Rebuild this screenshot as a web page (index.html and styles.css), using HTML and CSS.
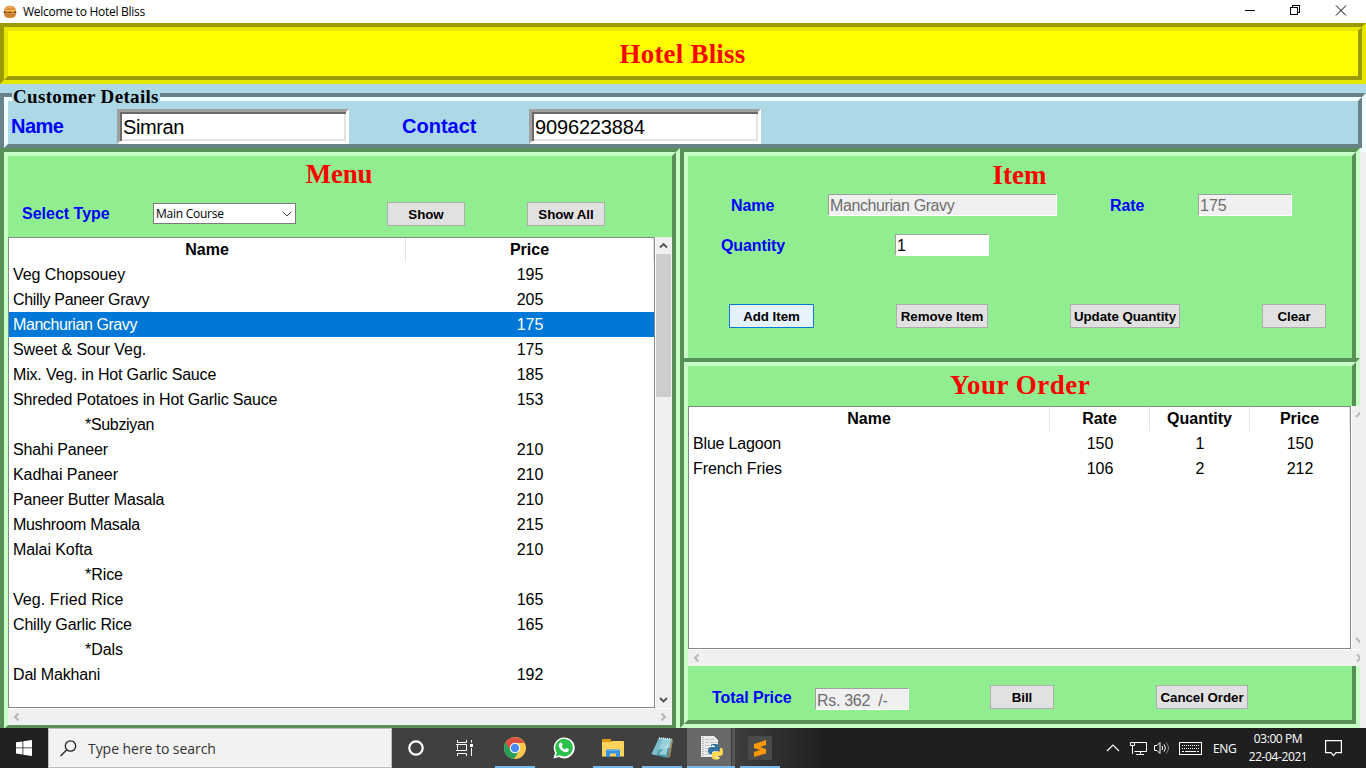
FILE: index.html
```html
<!DOCTYPE html>
<html lang="en">
<head>
<meta charset="utf-8">
<title>Welcome to Hotel Bliss</title>
<link rel="stylesheet" href="styles.css">
</head>
<body>
<header class="titlebar">
  <svg class="app-icon" width="14" height="14" viewBox="0 0 14 14"><path d="M1 5.500C1.500 2 4 .8 7 .8s5.500 1.200 6 4.700z" fill="#dc9038"/><path d="M3 3.500C5 1.800 8 1.800 10 2.500" stroke="#f5bd72" fill="none"/><path d="M.8 6h12.400v2.500H.8z" fill="#8a451a"/><path d="M1 5.500l3 2 3-1 3 1.500 3-2.500z" fill="#f0a52a"/><path d="M1 8.500h12c0 3-2 4.500-6 4.500s-6-1.500-6-4.500z" fill="#d0802d"/></svg>
  <span class="window-title">Welcome to Hotel Bliss</span>
  <svg class="window-buttons" width="110" height="20" viewBox="0 0 110 20" fill="none" stroke="#000" shape-rendering="crispEdges"><path d="M5 10.500h10M50.500 7.500h7v7h-7zM52.500 7.500v-2h7v7h-2"/><path shape-rendering="auto" d="M96 5.500l10 10M106 5.500l-10 10"/></svg>
</header>
<section class="groove banner"><div class="groove-in"><h1>Hotel Bliss</h1></div></section>
<section class="customer">
  <h2 class="legend">Customer Details</h2>
  <div class="groove blue"><div class="groove-in customer-row">
    <label class="big l-name">Name</label><div class="entry e-name tight">Simran</div>
    <label class="big l-contact">Contact</label><div class="entry e-contact">9096223884</div>
  </div></div>
</section>
<main>
  <section class="groove green menu"><div class="groove-in">
    <h2>Menu</h2>
    <div class="controls">
      <label>Select Type</label>
      <div class="combo"><span>Main Course</span><svg width="10" height="6" viewBox="0 0 10 6"><path d="M.8.8L5 5 9.200.8" fill="none" stroke="#444"/></svg></div>
      <div class="btn show">Show</div><div class="btn show-all">Show All</div>
    </div>
    <div class="tree-wrap">
      <div class="tree menu-tree">
        <div class="row head"><b>Name</b><b>Price</b></div>
        <div class="row"><span class="loose">Veg Chopsouey</span><i>195</i></div>
        <div class="row"><span class="tight">Chilly Paneer Gravy</span><i>205</i></div>
        <div class="row selected"><span class="tighter">Manchurian Gravy</span><i>175</i></div>
        <div class="row"><span class="loose">Sweet &amp; Sour Veg.</span><i>175</i></div>
        <div class="row"><span>Mix. Veg. in Hot Garlic Sauce</span><i>185</i></div>
        <div class="row"><span>Shreded Potatoes in Hot Garlic Sauce</span><i>153</i></div>
        <div class="row group"><span class="tight">*Subziyan</span><i></i></div>
        <div class="row"><span>Shahi Paneer</span><i>210</i></div>
        <div class="row"><span class="loose">Kadhai Paneer</span><i>210</i></div>
        <div class="row"><span>Paneer Butter Masala</span><i>210</i></div>
        <div class="row"><span class="tight">Mushroom Masala</span><i>215</i></div>
        <div class="row"><span class="loose">Malai Kofta</span><i>210</i></div>
        <div class="row group"><span class="loose">*Rice</span><i></i></div>
        <div class="row"><span class="looser">Veg. Fried Rice</span><i>165</i></div>
        <div class="row"><span>Chilly Garlic Rice</span><i>165</i></div>
        <div class="row group"><span class="loose">*Dals</span><i></i></div>
        <div class="row"><span>Dal Makhani</span><i>192</i></div>
      </div>
      <div class="vscroll">
        <svg width="15" height="17" viewBox="0 0 15 17"><path d="M4 10.500l3.500-3.500 3.500 3.500" fill="none" stroke="#505050" stroke-width="1.800"/></svg>
        <div class="thumb"></div>
        <svg class="down" width="15" height="17" viewBox="0 0 15 17"><path d="M4 7l3.500 3.500L11 7" fill="none" stroke="#505050" stroke-width="1.800"/></svg>
      </div>
    </div>
    <div class="hscroll"><svg width="16" height="16" viewBox="0 0 16 16"><path d="M10.500 4.500L7 8l3.500 3.500" fill="none" stroke="#b8b8b8" stroke-width="2"/></svg><svg width="16" height="16" viewBox="0 0 16 16"><path d="M5.500 4.500L9 8l-3.500 3.500" fill="none" stroke="#b8b8b8" stroke-width="2"/></svg></div>
  </div></section>
  <div class="right">
    <section class="groove green item"><div class="groove-in">
      <h2>Item</h2>
      <div class="form-row first"><label class="f-name">Name</label><div class="field disabled f-item">Manchurian Gravy</div><label class="f-rate">Rate</label><div class="field disabled num">175</div></div>
      <div class="form-row second"><label class="f-qty">Quantity</label><div class="field f-one">1</div></div>
      <div class="actions"><div class="btn add">Add Item</div><div class="btn remove">Remove Item</div><div class="btn update">Update Quantity</div><div class="btn clear">Clear</div></div>
    </div></section>
    <section class="groove green order"><div class="groove-in">
      <h2>Your Order</h2>
      <div class="order-list">
        <div class="tree-wrap">
          <div class="tree order-tree">
            <div class="row head"><b>Name</b><b>Rate</b><b>Quantity</b><b>Price</b></div>
            <div class="row"><span>Blue Lagoon</span><i>150</i><i>1</i><i>150</i></div>
            <div class="row"><span class="loose">French Fries</span><i>106</i><i>2</i><i>212</i></div>
          </div>
          <div class="vscroll cut">
            <svg width="8" height="17" viewBox="0 0 8 17"><path d="M4 11l5-5" stroke="#b8b8b8" stroke-width="2"/></svg>
            <svg class="down" width="8" height="17" viewBox="0 0 8 17"><path d="M4 6l5 5" stroke="#b8b8b8" stroke-width="2"/></svg>
          </div>
        </div>
        <div class="hscroll"><svg width="16" height="16" viewBox="0 0 16 16"><path d="M10.500 4.500L7 8l3.500 3.500" fill="none" stroke="#b8b8b8" stroke-width="2"/></svg><svg width="4" height="16" viewBox="0 0 4 16"><path d="M1 4.500L4.500 8 1 11.500" fill="none" stroke="#b8b8b8" stroke-width="2"/></svg></div>
      </div>
      <div class="total"><label>Total Price</label><div class="field disabled sum">Rs. 362&nbsp; /-</div><div class="btn bill">Bill</div><div class="btn cancel">Cancel Order</div></div>
    </div></section>
  </div>
</main>
<footer class="taskbar">
  <div class="start"><svg width="16" height="16" viewBox="0 0 16 16" fill="#fff"><path d="M0 2.300l6.500-.9v6.100H0zM7.300 1.300L16 0v7.500H7.300zM0 8.300h6.500v6.200L0 13.600zM7.300 8.300H16V16l-8.700-1.200z"/></svg></div>
  <div class="search"><svg width="17" height="17" viewBox="0 0 17 17" fill="none" stroke="#222" stroke-width="1.300"><circle cx="10.500" cy="6" r="5.200"/><path d="M6.800 9.800L.6 16"/></svg><span>Type here to search</span></div>
  <div class="task"><svg width="16" height="16" viewBox="0 0 16 16"><circle cx="8" cy="8" r="6.700" fill="none" stroke="#fff" stroke-width="2.200"/></svg></div>
  <div class="task"><svg width="17" height="16" viewBox="0 0 17 16" fill="none" stroke="#fff"><path d="M1.500 0v2.500h9V0M1.500 16v-2.500h9V16M1.500 4.500h9v6h-9zM0 4.500h1.500M0 10.500h1.500M15.500 0v2.500M15.500 8v8"/><path d="M14 4h3v3h-3z" fill="#fff" stroke="none"/></svg></div>
  <div class="task wide on"><svg width="22" height="22" viewBox="0 0 22 22"><circle cx="11" cy="11" r="11" fill="#fbc94a"/><path d="M1.500 5.500A11 11 0 0 1 20.500 6H11L6 13.500z" fill="#dc4e41"/><path d="M1.500 5.500A11 11 0 0 0 10 22l5.500-8.500H6.500z" fill="#27a05c"/><circle cx="11" cy="11" r="5.200" fill="#fff"/><circle cx="11" cy="11" r="4.200" fill="#4c8bf5"/></svg></div>
  <div class="task wide"><svg width="22" height="22" viewBox="0 0 22 22"><path d="M.5 21.500l1.500-5.600A10.500 10.500 0 1 1 6 20z" fill="#fff"/><path d="M2.700 19.400l1-3.900A8.800 8.800 0 1 1 6.700 18.300z" fill="#2bc04b"/><path d="M7.500 5.500l1.200.2 1 2.300-1 1.400c.8 1.500 2 2.500 3.500 3.100l1.200-1.400 2.500 1.200c0 2-1.300 3-3 3C9.500 15 6 11.500 5.800 8.500c0-1.300.7-2.400 1.700-3z" fill="#fff"/></svg></div>
  <div class="task wide on"><svg width="22" height="18" viewBox="0 0 22 18"><path d="M0 1q0-1 1-1h8v3H0z" fill="#e19a0c"/><path d="M0 3h9l1-1h11q1 0 1 1v14.500H0z" fill="#ffd35c"/><path d="M4 18v-6.500q0-1 1-1h12q1 0 1 1V18h-4v-3.500H8V18z" fill="#3493dc"/><path d="M5 10.500h12v1.500H5z" fill="#5fb2ea"/></svg></div>
  <div class="task wide on"><svg width="22" height="22" viewBox="0 0 22 22"><path d="M20 2l2 1-3 17-2 1z" fill="#a58d58"/><path d="M8 1l12.500 1-4 19L.5 17z" fill="#4f9fb2"/><path d="M8 1l12.500 1-2 9L5 13z" fill="#96d0da"/><path d="M8 1L.5 17l5 1.500L12 1.300z" fill="#7fbcc9"/><path d="M18 5l-3 13-7-1z" fill="#c6e8ec" opacity=".65"/><path d="M8 1l12.500 1" stroke="#eaf6f6" stroke-width="1.500" stroke-dasharray="1 1"/></svg></div>
  <div class="task python on"><svg width="23" height="24" viewBox="0 0 23 24"><path d="M1 0h13l4 4v17H1z" fill="#ececec"/><path d="M3 1v20" stroke="#888" stroke-dasharray="1 1"/><path d="M5 3.500h9M5 6.500h12M5 9.500h12M5 12.500h12M5 15.500h12M5 18.500h12" stroke="#c2c2c2" stroke-dasharray="4 1"/><path d="M12 8h4q3 0 3 3v4h-5q-2 0-2 3h-2q-2 0-2-3.500t3-3.500h4v-1h-4q0-2 1-2z" fill="#35719f"/><path d="M20 12h1q2 0 2 4t-3 4h-4v1h4q0 2.800-4 2.800t-4-2.800v-3q0-2 3-2h3q2 0 2-2z" fill="#ffd94e"/><path d="M12 9h1.500v1H12zM17 21.500h1.500v1H17z" fill="#fff"/></svg></div>
  <div class="task sub on"><svg width="24" height="24" viewBox="0 0 24 24"><rect width="24" height="24" rx="1.500" fill="#4a4a4a"/><path d="M6 8L18 4v5l-6 2 6 2v4.500L6 21v-5l6-2-6-2z" fill="#ff9800"/></svg></div>
  <div class="tray">
    <svg width="14" height="8" viewBox="0 0 14 8"><path d="M1 7l6-6 6 6" fill="none" stroke="#fff" stroke-width="1.200"/></svg>
    <svg class="net" width="17" height="15" viewBox="0 0 17 15" fill="none" stroke="#fff"><path d="M5 1.500h11.500v9H4.500M10.500 10.500v3M6 13.500h8M.5 1.500h4v3h-4zM2.500 5v8"/></svg>
    <svg class="vol" width="16" height="14" viewBox="0 0 16 14" fill="none" stroke="#fff"><path d="M.5 4.500H3L6 1.500v11L3 9.500H.5zM8 5q1.500 2 0 4M10 3.300q3 3.700 0 7.400"/><path d="M12 1.500q5 5.500 0 11" stroke="#888"/></svg>
    <svg class="kbd" width="23" height="13" viewBox="0 0 23 13" fill="none" stroke="#fff"><rect x=".5" y=".5" width="22" height="12"/><path d="M3 3.500h17M3 6.500h17" stroke-dasharray="1 1"/><path d="M3 9.500h2M6 9.500h11M18 9.500h2"/></svg>
    <span class="lang">ENG</span>
    <div class="clock"><span>03:00 PM</span><span>22-04-2021</span></div>
    <svg class="note" width="17" height="17" viewBox="0 0 17 17"><path d="M.6.600h15.800v12H11l-2.500 3-2.500-3H.6z" fill="none" stroke="#fff" stroke-width="1.200"/></svg>
  </div>
</footer>
</body>
</html>
```
FILE: styles.css
```css
* { box-sizing: border-box; }
body { margin: 0; width: 1366px; height: 768px; overflow: hidden; background: #f0f0f0; font: 16px "Liberation Sans", Arial, sans-serif; color: #000; }
svg { display: block; flex: none; }
h1, h2 { margin: 0; font: bold 27px/30px "Liberation Serif", "Times New Roman", serif; color: #f00; text-align: center; }
label { font-weight: bold; color: #00f; white-space: nowrap; }

.titlebar { height: 23px; background: #fff; display: flex; align-items: center; padding-left: 3px; }
.window-title { font: 12px "Open Sans", sans-serif; margin-left: 6px; flex: 1; letter-spacing: -.27px; }
.window-buttons { margin-right: 16px; align-self: flex-start; }

.groove { border: 4px solid; border-color: var(--dark) var(--light) var(--light) var(--dark); }
.groove-in { height: 100%; border: 4px solid; border-color: var(--light) var(--dark) var(--dark) var(--light); background: var(--face); }
.banner { --dark: #999900; --light: #e6e600; --face: #ffff00; height: 61px; }
.banner h1 { line-height: 46px; letter-spacing: .2px; padding-right: 1px; }
.blue { --dark: #68828a; --light: #f0ffff; --face: #add8e6; height: 59px; }
.green { --dark: #569056; --light: #c8ffc8; --face: #90ee90; }

.customer { position: relative; height: 68px; padding-top: 9px; background: #add8e6; }
.legend { position: absolute; left: 12px; top: 2px; width: 148px; background: #add8e6; color: #000; font-size: 19px; line-height: 22px; text-align: left; padding-left: 1px; letter-spacing: .33px; white-space: nowrap; }
.customer-row { display: flex; align-items: flex-start; padding-top: 8px; }
.big { font-size: 20px; line-height: 34px; }
.l-name { width: 106px; margin-left: 3px; letter-spacing: -.5px; }
.l-contact { width: 127px; margin-left: 53px; }
.entry { width: 232px; height: 35px; border: 3px solid; border-color: #a0a0a0 #fff #fff #a0a0a0; background: #fff; box-shadow: inset 2px 2px #696969, inset -2px -2px #e3e3e3; font-size: 20px; line-height: 30px; padding-left: 3px; letter-spacing: -.15px; }
.entry.tight { letter-spacing: -.4px; }

main { position: relative; margin-top: -4px; width: 1360px; height: 580px; display: flex; align-items: flex-start; overflow: hidden; }
.menu { width: 680px; height: 585px; }
.menu h2 { line-height: 36px; letter-spacing: -.25px; padding-right: 2px; }
.controls { display: flex; height: 45px; padding-left: 14px; align-items: flex-start; padding-top: 10px; }
.controls label { width: 131px; line-height: 24px; }
.combo { width: 143px; height: 21px; margin-top: 1px; border: 1px solid #7a7a7a; background: #fff; display: flex; align-items: center; justify-content: space-between; padding: 0 3px 0 2px; font: 12px "Open Sans", sans-serif; letter-spacing: -.25px; }
.btn { height: 24px; border: 1px solid #adadad; background: #e1e1e1; font-weight: bold; font-size: 13.330px; line-height: 23px; text-align: center; white-space: nowrap; letter-spacing: -.05px; }
.show { width: 78px; margin-left: 91px; }
.show-all { width: 78px; margin-left: 62px; }

.tree-wrap { display: flex; }
.tree { border: 1px solid #828790; background: #fff; }
.row { display: grid; height: 25px; line-height: 25px; white-space: pre; }
.row span { padding-left: 4px; letter-spacing: -.17px; }
.row .loose { letter-spacing: -.07px; }
.row .looser { letter-spacing: .07px; }
.row .tight { letter-spacing: -.32px; }
.row .tighter { letter-spacing: -.42px; }
.row i { font-style: normal; text-align: center; }
.head { height: 24px; line-height: 23px; }
.head b { text-align: center; border-right: 1px solid #e5e5e5; }
.group span { padding-left: 76px; }
.selected { background: #0078d7; color: #fff; }
.menu-tree { width: 647px; height: 471px; }
.menu-tree .row { grid-template-columns: 397px 248px; }
.vscroll { width: 17px; background: #f0f0f0; border-left: 1px solid #fff; display: flex; flex-direction: column; }
.thumb { width: 15px; height: 143px; background: #cdcdcd; }
.down { margin-top: auto; }
.hscroll { height: 17px; border-top: 1px solid #fff; background: #f0f0f0; display: flex; justify-content: space-between; }

.item { width: 680px; height: 210px; border-bottom: 0; }
.item .groove-in { border-bottom: 0; }
.item h2 { line-height: 38px; padding-right: 1px; }
.form-row { display: flex; height: 22px; line-height: 22px; }
.form-row label { line-height: 24px; letter-spacing: -.1px; }
.field { height: 22px; border: 1px solid; border-color: #a0a0a0 #fff #fff #a0a0a0; background: #fff; padding-left: 1px; white-space: pre; line-height: 22px; }
.disabled { background: #f0f0f0; color: #6d6d6d; }
.first { padding-left: 43px; }
.second { padding-left: 33px; margin-top: 18px; }
.f-name { width: 97px; }
.f-item { width: 229px; letter-spacing: -.4px; }
.f-rate { width: 88px; margin-left: 53px; }
.num, .f-one { width: 94px; }
.f-qty { width: 174px; }
.actions { display: flex; margin-top: 48px; padding-left: 41px; }
.add { width: 85px; background: #e5f1fb; border-color: #0078d7; }
.remove { width: 92px; margin-left: 82px; }
.update { width: 110px; margin-left: 82px; }
.clear { width: 64px; margin-left: 82px; }

.order { width: 680px; height: 370px; }
.order h2 { line-height: 38px; height: 40px; letter-spacing: .5px; }
.order-list { width: 672px; }
.order-tree { width: 663px; height: 243px; }
.order-tree .row { grid-template-columns: 361px 100px 100px 100px; }
.cut { width: 9px; }
.total { display: flex; padding: 19px 0 0 24px; }
.total label { width: 103px; line-height: 25px; letter-spacing: -.1px; }
.sum { width: 94px; margin-top: 3px; line-height: 23px; letter-spacing: -.3px; }
.bill { width: 64px; margin-left: 81px; }
.cancel { width: 92px; margin-left: 102px; }

.taskbar { height: 40px; display: flex; color: #fff; background: linear-gradient(90deg, #404040 0, #404040 725px, #1f1f1f 825px); font-family: "Open Sans", sans-serif; }
.start { width: 48px; background: #202020; display: grid; place-items: center; }
.search { width: 344px; background: #f2f2f2; border: 1px solid #bcbcbc; display: flex; align-items: center; padding-left: 11px; color: #333; font-size: 14px; letter-spacing: -.05px; }
.search span { margin-left: 11px; }
.task { width: 48px; display: grid; place-items: center; }
.wide { width: 40px; margin-left: 9px; }
.search + .task + .task + .wide { margin-left: 7px; }
.on { border-bottom: 2px solid #76b9ed; padding-top: 1px; }
.python { width: 48px; margin-left: 5px; background: linear-gradient(90deg, #686868 44px, #3a3a3a 44px, #3a3a3a 45px, #555 45px); }
.sub { width: 40px; margin-left: 5px; }
.tray { margin-left: auto; display: flex; align-items: center; padding-right: 24px; }
.net { margin-left: 10px; }
.vol { margin-left: 7px; }
.kbd { margin-left: 9px; }
.lang { font-size: 12px; margin-left: 11px; width: 24px; letter-spacing: -.4px; }
.clock { margin-left: 11px; width: 60px; display: flex; flex-direction: column; align-items: center; font-size: 12px; line-height: 18px; letter-spacing: -.4px; white-space: nowrap; }
.note { margin-left: 17px; }
```
